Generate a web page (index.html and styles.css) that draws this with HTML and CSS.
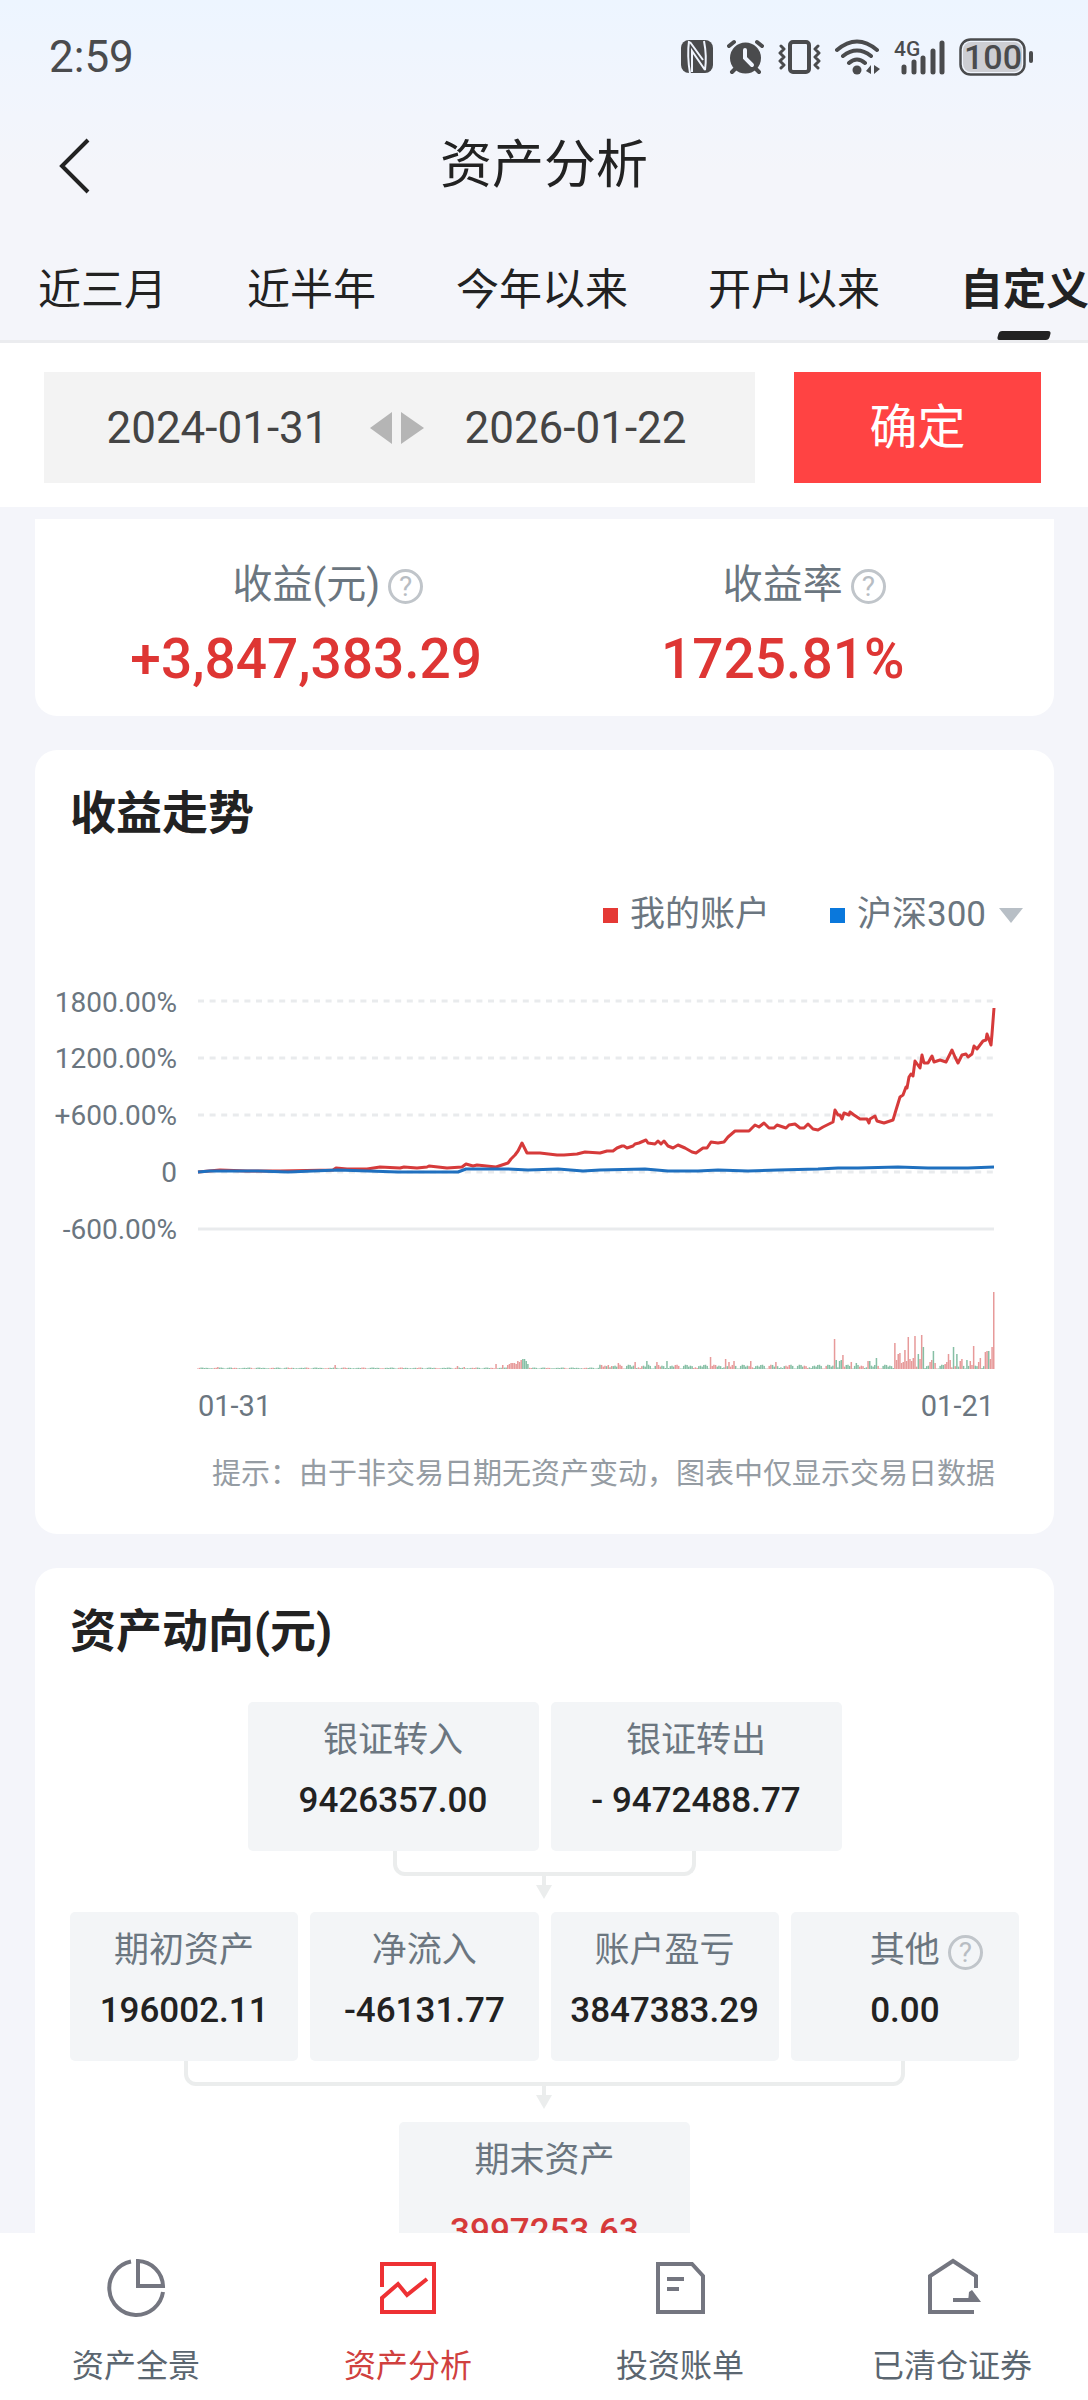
FILE: index.html
```html
<!DOCTYPE html>
<html lang="zh-CN">
<head>
  <meta charset="UTF-8" />
  <title>资产分析</title>
  <meta name="viewport" content="width=device-width, initial-scale=1.0" />
  <link rel="stylesheet" href="styles.css">
</head>
<body>
  <div class="app">
    <header class="top">
      <div class="status-bar">
        <span class="time">2:59</span>
        <div class="status-icons">
          <svg width="32" height="38" viewBox="0 0 32 38">
            <rect x="0" y="2" width="32" height="33" rx="8" fill="#4a4b4d"/>
            <path d="M8 3Q6 18 9 35M11 34V13L24 32M23 3Q26 18 24 32M9 4L22 22" fill="none" stroke="#f0f5fe" stroke-width="2"/>
          </svg>
          <svg width="37" height="38" viewBox="0 0 37 38" fill="none" stroke="#4a4b4d" stroke-linecap="round">
            <circle cx="18.500" cy="20" r="15.500" fill="#4a4b4d" stroke="none"/>
            <path d="M2 8L7 4M35 8L30 4M8 31L5 34M29 31L32 34" stroke-width="4"/>
            <path d="M18 12V20L25 27" stroke="#f0f5fe" stroke-width="4"/>
          </svg>
          <svg width="43" height="38" viewBox="0 0 43 38" fill="none" stroke="#4a4b4d" stroke-linecap="round" stroke-linejoin="round">
            <rect x="12" y="4" width="19" height="30" rx="3" stroke-width="4"/>
            <path d="M3 8L6 11L2 15L6 19L2 23L6 27L3 30M40 8L37 11L41 15L37 19L41 23L37 27L40 30" stroke-width="3"/>
          </svg>
          <svg width="45" height="38" viewBox="0 0 45 38" fill="none" stroke="#4a4b4d" stroke-linecap="round" stroke-width="4">
            <path d="M2 12Q22 -5 42 12M8 18Q22 7 36 18M14 25Q22 18 30 25"/>
            <circle cx="22" cy="32" r="4.500" fill="#4a4b4d" stroke="none"/>
            <path d="M36 27V36L31 33ZM39 27L45 31L39 36Z" fill="#4a4b4d" stroke="none"/>
          </svg>
          <svg width="51" height="38" viewBox="0 0 51 38">
            <path d="M10 29V34M20 24V34M29 20V34M39 13V34M48 5V34" stroke="#4a4b4d" stroke-width="5" stroke-linecap="round"/>
            <text class="network" x="0" y="18">4G</text>
          </svg>
          <svg width="75" height="38" viewBox="0 0 75 38">
            <rect x="1.500" y="1.500" width="64" height="35" rx="10" fill="none" stroke="#4a4b4d" stroke-width="2.500"/>
            <rect x="4" y="4" width="59" height="30" rx="8" fill="#cdced3"/>
            <path d="M72 15V23" stroke="#4a4b4d" stroke-width="4" stroke-linecap="round"/>
            <text class="battery" x="34" y="31" text-anchor="middle">100</text>
          </svg>
        </div>
      </div>

      <div class="title-bar">
        <button class="back" aria-label="返回">
          <svg width="32" height="56" viewBox="0 0 32 56" fill="none" stroke="#222" stroke-width="4">
            <path d="M29 2L3 28L29 54"/>
          </svg>
        </button>
        <h1>资产分析</h1>
      </div>

      <nav class="tabs">
        <button class="tab">近三月</button>
        <button class="tab">近半年</button>
        <button class="tab">今年以来</button>
        <button class="tab">开户以来</button>
        <button class="tab active">自定义</button>
      </nav>
    </header>

    <form class="filter">
      <div class="range">
        <input type="text" value="2024-01-31" aria-label="开始日期" readonly>
        <svg width="54" height="32" viewBox="0 0 54 32" fill="#b5b5b5">
          <path d="M0 16L22 0V32ZM54 16L31 0V32Z"/>
        </svg>
        <input type="text" value="2026-01-22" aria-label="结束日期" readonly>
      </div>
      <button type="button" class="confirm">确定</button>
    </form>

    <main class="content">
      <section class="card summary">
        <div class="metric">
          <p class="metric-label">收益(元)<button class="help">?</button></p>
          <p class="metric-value">+3,847,383.29</p>
        </div>
        <div class="metric">
          <p class="metric-label">收益率<button class="help">?</button></p>
          <p class="metric-value">1725.81%</p>
        </div>
      </section>

      <section class="card">
        <h2>收益走势</h2>
        <div class="legend">
          <span class="legend-item"><i class="swatch red"></i>我的账户</span>
          <label class="legend-item"><i class="swatch blue"></i>
            <select aria-label="对比指数"><option>沪深300</option></select>
            <i class="caret"></i>
          </label>
        </div>
        <svg class="chart" viewBox="-141 0 962 440">
          <g class="axis" text-anchor="end">
            <text x="-21" y="31">1800.00%</text>
            <text x="-21" y="87">1200.00%</text>
            <text x="-21" y="144">+600.00%</text>
            <text x="-21" y="201">0</text>
            <text x="-21" y="258">-600.00%</text>
          </g>
          <path class="grid dashed" d="M0 20H796M0 77H796M0 134H796M0 191H796"/>
          <path class="grid" d="M0 248H796"/>
          <g id="bars"></g>
          <polyline class="line account" points="0,191 22,189 49,190 82,190 135,189 138,187 149,188 169,188 182,186 202,187 206,186 219,187 229,186 231,185 249,187 264,186 268,183 275,185 279,184 298,186 304,184 310,182 313,178 317,174 320,170 324,162 329,172 342,172 359,174 366,174 379,173 387,171 402,172 409,170 415,170 419,167 424,165 426,165 429,167 435,165 437,163 441,162 448,159 450,162 457,163 460,160 463,163 466,160 470,165 475,167 480,164 487,167 494,171 498,172 505,167 509,167 513,161 520,162 526,161 530,156 537,150 551,150 557,144 561,146 566,142 571,147 576,147 579,144 588,147 591,144 597,143 602,147 606,147 610,143 615,148 620,149 625,146 635,141 637,129 640,134 642,134 644,138 646,132 651,134 652,131 656,134 662,138 669,138 671,142 672,138 677,135 679,140 686,142 695,139 698,129 702,116 705,114 708,106 709,107 711,96 713,93 715,95 717,80 722,87 724,74 726,82 730,82 734,75 736,81 742,79 748,81 754,69 757,76 760,82 764,74 768,73 770,76 774,73 776,65 779,68 785,60 788,59 789,53 793,64 794,53 796,27"/>
          <polyline class="line index" points="0,191 12,190 22,190 60,190 90,191 140,189 200,191 260,191 268,188 300,188 310,188 330,189 360,188 385,190 402,189 447,188 470,190 500,190 520,189 550,190 580,189 620,188 640,187 660,187 700,186 730,187 770,187 796,186"/>
          <g class="axis dates">
            <text x="0" y="435">01-31</text>
            <text x="796" y="435" text-anchor="end">01-21</text>
          </g>
        </svg>
        <p class="note">提示：由于非交易日期无资产变动，图表中仅显示交易日数据</p>
      </section>

      <section class="card">
        <h2>资产动向(元)</h2>
        <div class="flow">
          <div class="pair">
            <div class="node"><span>银证转入</span><b>9426357.00</b></div>
            <div class="node"><span>银证转出</span><b>- 9472488.77</b></div>
          </div>
          <div class="connector narrow"></div>
          <div class="quad">
            <div class="node"><span>期初资产</span><b>196002.11</b></div>
            <div class="node"><span>净流入</span><b>-46131.77</b></div>
            <div class="node"><span>账户盈亏</span><b>3847383.29</b></div>
            <div class="node"><span>其他<button class="help">?</button></span><b>0.00</b></div>
          </div>
          <div class="connector wide"></div>
          <div class="pair">
            <div class="node total"><span>期末资产</span><b>3997253.63</b></div>
          </div>
        </div>
      </section>
    </main>

    <nav class="bottom-nav">
      <a href="#overview">
        <svg width="60" height="60" viewBox="0 0 60 60">
          <path d="M25 3.500A27 27 0 1 0 57 34M32 3V28H57A26 26 0 0 0 32 3Z"/>
        </svg>
        资产全景
      </a>
      <a href="#analysis" class="active">
        <svg width="60" height="60" viewBox="0 0 60 60">
          <path d="M4 29V6H56V54H4V40L20 26L29 37L49 21"/>
        </svg>
        资产分析
      </a>
      <a href="#bills">
        <svg width="60" height="60" viewBox="0 0 60 60">
          <path d="M8 6H42L53 18V54H8ZM17 21H34M17 31H29"/>
        </svg>
        投资账单
      </a>
      <a href="#closed">
        <svg width="60" height="60" viewBox="0 0 60 60">
          <path d="M54 30V18L31 3L8 18V54H52"/>
          <path d="M31 42H52"/>
          <path d="M47 34L50 32L59 44H46Z" fill="#747680" stroke="none"/>
        </svg>
        已清仓证券
      </a>
    </nav>
  </div>
  <script src="script.js"></script>
</body>
</html>
```

FILE: styles.css
```css
* {
  box-sizing: border-box;
}

body {
  margin: 0;
  background: #f4f5fa;
  color: #222;
  font-family: Roboto, "Noto Sans CJK SC", sans-serif;
}

h1, h2, p {
  margin: 0;
}

button, input, select {
  margin: 0;
  padding: 0;
  border: none;
  background: none;
  color: inherit;
  font: inherit;
}

.app {
  height: 100vh;
  display: flex;
  flex-direction: column;
  overflow: hidden;
}

.top {
  background: linear-gradient(#edf5ff, #f1f5fd 90px, #f4f5fa 170px);
  border-bottom: 3px solid #ebecef;
}

/* status bar */
.status-bar {
  display: flex;
  align-items: center;
  justify-content: space-between;
  height: 113px;
  padding: 0 54px 0 49px;
  color: #4a4b4d;
}

.time {
  font-size: 44px;
}

.status-icons {
  display: flex;
  gap: 14px;
}

.network {
  fill: #4a4b4d;
  font-size: 21px;
  font-weight: 500;
}

.battery {
  fill: #4a4b4d;
  font-size: 34px;
  font-weight: 500;
}

.title-bar {
  display: grid;
  grid-template-columns: 1fr auto 1fr;
  align-items: center;
  height: 106px;
  padding: 0 59px;
}

.back {
  display: flex;
}

h1 {
  font-size: 52px;
  font-weight: 400;
  line-height: 60px;
}

.tabs {
  display: flex;
  gap: 80px;
  padding: 21px 0 0 38px;
  overflow: hidden;
}

.tab {
  position: relative;
  flex: none;
  font-size: 43px;
  line-height: 100px;
}

.tab.active {
  font-weight: 700;
}

.tab.active::after {
  content: "";
  position: absolute;
  left: 50%;
  bottom: 0;
  width: 52px;
  height: 9px;
  margin-left: -27px;
  border-radius: 3px;
  background: #222;
  transform: skewX(-15deg);
}

/* date filter */
.filter {
  display: flex;
  gap: 39px;
  padding: 29px 47px 24px 44px;
  background: #fff;
}

.range {
  flex: 1;
  display: flex;
  align-items: center;
  justify-content: center;
  gap: 40px;
  padding-right: 6px;
  background: #f3f3f3;
  color: #444;
}

.range input {
  width: 224px;
  font-size: 44px;
  text-align: center;
}

.confirm {
  width: 247px;
  height: 111px;
  padding-bottom: 10px;
  background: #ff4343;
  color: #fff;
  font-size: 48px;
}

.content {
  flex: 1;
  min-height: 0;
  padding: 12px 34px 0 35px;
  overflow: hidden;
}

.card {
  margin-bottom: 34px;
  padding: 33px 35px 40px;
  border-radius: 22px;
  background: #fff;
}

.summary {
  display: grid;
  grid-template-columns: 1fr 1fr;
  padding: 41px 33px 27px;
  border-radius: 0 0 22px 22px;
  text-align: center;
}

.metric-label {
  position: relative;
  width: max-content;
  margin: 0 auto 19px;
  color: #6b7680;
  font-size: 40px;
  line-height: 50px;
}

.metric-value {
  color: #de3634;
  font-size: 55px;
  font-weight: 500;
  line-height: 60px;
}

.help {
  position: absolute;
  left: 100%;
  top: 9px;
  width: 35px;
  height: 35px;
  margin-left: 8px;
  border: 3px solid #c0c5ca;
  border-radius: 50%;
  color: #b8bdc3;
  font-size: 28px;
  line-height: 29px;
}

h2 {
  font-size: 46px;
  font-weight: 700;
  line-height: 60px;
}

/* trend chart */
.legend {
  display: flex;
  justify-content: flex-end;
  gap: 60px;
  margin-top: 47px;
  margin-right: -4px;
  color: #6b7680;
  font-size: 35px;
  line-height: 50px;
}

.legend-item {
  display: flex;
  align-items: center;
}

.legend select {
  appearance: none;
}

.swatch {
  width: 15px;
  height: 15px;
  margin-right: 12px;
}

.swatch.red {
  background: #e53935;
}

.swatch.blue {
  background: #0a78dc;
}

.caret {
  margin-left: 12px;
  border: 12px solid transparent;
  border-top: 15px solid #b8bfc6;
  border-bottom: none;
}

.chart {
  display: block;
  width: calc(100% + 13px);
  margin: 41px 0 0 -13px;
  overflow: visible;
}

.axis {
  fill: #6b7680;
  font-size: 28px;
}

.axis.dates {
  font-size: 29px;
}

.grid {
  stroke: #e9ebed;
  stroke-width: 3;
}

.grid.dashed {
  stroke-dasharray: 6 5.6;
}

.line {
  fill: none;
  stroke-width: 3;
  stroke-linejoin: round;
}

.account {
  stroke: #d63a3a;
}

.index {
  stroke: #1f70bf;
}

.up {
  fill: #e79a9a;
}

.down {
  fill: #86bfa5;
}

.note {
  margin: 33px 24px 0 0;
  color: #959ca3;
  font-size: 29px;
  line-height: 40px;
  text-align: right;
  white-space: nowrap;
}

/* asset flow */
.flow {
  margin-top: 41px;
}

.pair {
  display: flex;
  justify-content: center;
  gap: 12px;
}

.pair .node {
  width: 291px;
}

.quad {
  display: grid;
  grid-template-columns: repeat(4, 1fr);
  gap: 12px;
}

.node {
  display: flex;
  flex-direction: column;
  align-items: center;
  gap: 10px;
  padding: 14px 0 25px;
  border-radius: 5px;
  background: #f3f5f7;
  line-height: 50px;
}

.node span {
  position: relative;
  color: #6b7680;
  font-size: 35px;
}

.node b {
  font-size: 35px;
  font-weight: 500;
}

.node.total {
  gap: 21px;
}

.total b {
  color: #d63a3a;
}

.connector {
  position: relative;
  height: 25px;
  margin: 0 auto 36px;
  border: 4px solid #ebeded;
  border-top: none;
  border-radius: 0 0 12px 12px;
}

.narrow {
  width: 32%;
}

.wide {
  width: 76%;
}

.connector::before,
.connector::after {
  content: "";
  position: absolute;
  top: 100%;
  left: 50%;
  transform: translateX(-50%);
}

.connector::before {
  width: 4px;
  height: 14px;
  background: #ebeded;
}

.connector::after {
  margin-top: 13px;
  border: 8px solid transparent;
  border-top: 14px solid #ebeded;
  border-bottom: none;
}

/* bottom navigation */
.bottom-nav {
  display: grid;
  grid-template-columns: repeat(4, 1fr);
  height: 167px;
  padding-top: 25px;
  background: #fff;
}

.bottom-nav a {
  display: flex;
  flex-direction: column;
  align-items: center;
  gap: 28px;
  color: #5b6670;
  font-size: 32px;
  line-height: 40px;
  text-decoration: none;
}

.bottom-nav svg {
  fill: none;
  stroke: #747680;
  stroke-width: 4;
}

.bottom-nav .active {
  color: #d0403e;
}

.bottom-nav .active svg {
  stroke: #ee3134;
}
```

FILE: script.js
```js
const bars = document.getElementById('bars');
const baseline = 388;

// daily changes that stand out: day -> height, negative means a loss
const peaks = {
  12: 2, 155: 3, 82: 4, 159: 2, 245: 4, 178: 5, 182: 4,
  185: 4, 186: 5, 187: 6, 188: 6, 189: 6, 190: 5, 191: 8, 192: 7, 193: 9,
  194: -10, 195: -10, 196: -8, 197: -5, 247: 3, 251: 6, 261: 7, 268: -8,
  274: 7, 280: -8, 306: 12, 315: 10, 317: 7, 320: 8, 330: 8, 345: 7,
  380: 30, 381: -9, 383: -8, 384: -9, 385: 14, 390: 7, 393: -6, 400: 8,
  401: -8, 405: -11, 416: 26, 417: 9, 418: 15, 419: 16, 420: 6, 421: 7,
  422: 19, 423: 8, 424: 32, 425: 10, 426: 8, 427: 11, 428: 33, 430: -15,
  431: 10, 432: 34, 433: -22, 437: 7, 438: 9, 439: -18, 440: 6, 446: 5,
  447: 7, 448: 15, 449: 9, 451: -22, 453: -15, 455: 8, 456: 10, 459: -9,
  461: 8, 463: 23, 466: 7, 467: 11, 470: 17, 471: 18, 472: -18, 473: 10,
  474: 22, 475: 77
};

for (let day = 0; day <= 475; day++) {
  const noise = (day * 7919 + day * day * 31) % 17 / 17;
  const base = day < 240 ? 1 : 4;
  const change = peaks[day] || (0.5 + noise * base) * (day * day * 13 % 11 < 5 ? 1 : -1);
  const bar = document.createElementNS('http://www.w3.org/2000/svg', 'rect');
  bar.setAttribute('class', change > 0 ? 'up' : 'down');
  bar.setAttribute('x', day * 796 / 475 - 1);
  bar.setAttribute('y', baseline - Math.abs(change));
  bar.setAttribute('width', 1.5);
  bar.setAttribute('height', Math.abs(change));
  bars.appendChild(bar);
}
```
